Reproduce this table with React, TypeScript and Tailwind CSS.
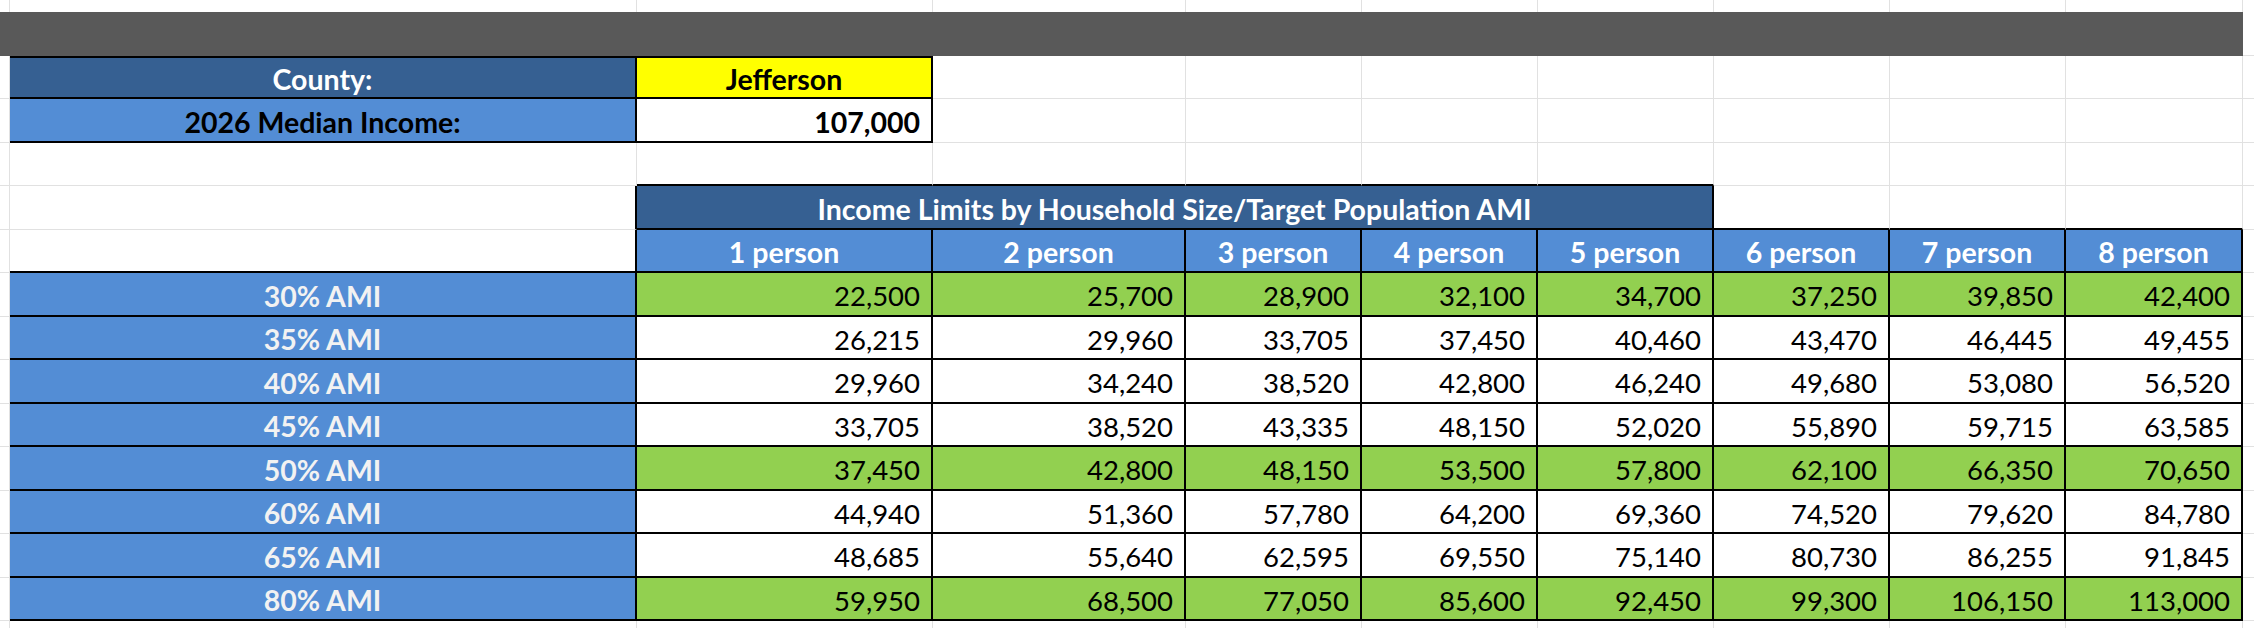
import React from "react";

const G = "border-[#e1e1e1]";
const LB = "bg-[#538dd5]";
const DB = "bg-[#366092]";
const GREEN = "bg-[#92d050]";
const BOLD = "font-bold text-[28.5px]";

const rows: { label: string; vals: string[]; green: boolean }[] = [
  { label: "30% AMI", vals: ["22,500", "25,700", "28,900", "32,100", "34,700", "37,250", "39,850", "42,400"], green: true },
  { label: "35% AMI", vals: ["26,215", "29,960", "33,705", "37,450", "40,460", "43,470", "46,445", "49,455"], green: false },
  { label: "40% AMI", vals: ["29,960", "34,240", "38,520", "42,800", "46,240", "49,680", "53,080", "56,520"], green: false },
  { label: "45% AMI", vals: ["33,705", "38,520", "43,335", "48,150", "52,020", "55,890", "59,715", "63,585"], green: false },
  { label: "50% AMI", vals: ["37,450", "42,800", "48,150", "53,500", "57,800", "62,100", "66,350", "70,650"], green: true },
  { label: "60% AMI", vals: ["44,940", "51,360", "57,780", "64,200", "69,360", "74,520", "79,620", "84,780"], green: false },
  { label: "65% AMI", vals: ["48,685", "55,640", "62,595", "69,550", "75,140", "80,730", "86,255", "91,845"], green: false },
  { label: "80% AMI", vals: ["59,950", "68,500", "77,050", "85,600", "92,450", "99,300", "106,150", "113,000"], green: true },
];

const persons = ["1 person", "2 person", "3 person", "4 person", "5 person", "6 person", "7 person", "8 person"];

function Grid({ n, last = false, k }: { n: number; last?: boolean; k: string }) {
  return (
    <>
      {Array.from({ length: n }).map((_, i) => (
        <div key={k + i} className={`border-b ${i === n - 1 && last ? "" : "border-r"} ${G}`} />
      ))}
    </>
  );
}

export default function App() {
  const font = { fontFamily: "Lato, 'Noto Sans', sans-serif" };
  return (
    <div
      className="w-[2254px] h-[628px] bg-white overflow-hidden grid grid-cols-[10px_627px_296px_253px_176px_176px_176px_176px_176px_177px_11px] grid-rows-[12px_repeat(14,43.5px)_7px] text-[27.5px] text-black"
      style={font}
    >
      {/* row 0 */}
      {Array.from({ length: 11 }).map((_, i) => (
        <div key={"r0" + i} className={i < 10 ? `border-r ${G}` : ""} />
      ))}
      {/* row 1: dark bar */}
      <div className="col-span-10 bg-[#595959]" />
      <div className={`border-b ${G}`} />
      {/* row 2: County */}
      <div className={`border-r border-b ${G}`} />
      <div className={`${DB} border-t-2 border-b-2 border-r-2 border-black flex items-center justify-center ${BOLD} text-white leading-none pt-[4px]`}>
        County:
      </div>
      <div className={`bg-[#ffff00] border-t-2 border-b-2 border-r-2 border-black flex items-center justify-center ${BOLD} leading-none pt-[4px]`}>
        Jefferson
      </div>
      <Grid n={8} last k="r2" />
      {/* row 3: Median */}
      <div className={`border-r border-b ${G}`} />
      <div className={`${LB} border-b-2 border-r-2 border-black flex items-center justify-center ${BOLD} leading-none pt-[4px]`}>
        2026 Median Income:
      </div>
      <div className={`bg-white border-b-2 border-r-2 border-black flex items-center justify-end pr-[11px] ${BOLD} leading-none pt-[4px]`}>
        107,000
      </div>
      <Grid n={8} last k="r3" />
      {/* row 4: empty */}
      <div className={`border-r border-b ${G}`} />
      <div className={`border-r border-b ${G}`} />
      {Array.from({ length: 5 }).map((_, i) => (
        <div key={"r4b" + i} className="border-b-2 border-b-black border-r border-r-[#e1e1e1]" />
      ))}
      <Grid n={4} last k="r4" />
      {/* row 5: Income header */}
      <div className={`border-r border-b ${G}`} />
      <div className="border-b border-b-[#e1e1e1] border-r-2 border-r-black" />
      <div className={`col-span-5 ${DB} border-b-2 border-r-2 border-black flex items-center justify-center ${BOLD} text-white leading-none pt-[4px]`}>
        Income Limits by Household Size/Target Population AMI
      </div>
      {Array.from({ length: 3 }).map((_, i) => (
        <div key={"r5b" + i} className="border-b-2 border-b-black border-r border-r-[#e1e1e1]" />
      ))}
      <div className={`border-b ${G}`} />
      {/* row 6: person header */}
      <div className={`border-r border-b ${G}`} />
      <div className="border-b-2 border-r-2 border-black" />
      {persons.map((p) => (
        <div key={p} className={`${LB} border-b-2 border-r-2 border-black flex items-center justify-center ${BOLD} text-white leading-none pt-[4px]`}>
          {p}
        </div>
      ))}
      <div className={`border-b ${G}`} />
      {/* data rows */}
      {rows.map((r) => (
        <React.Fragment key={r.label}>
          <div className={`border-r border-b ${G}`} />
          <div className={`${LB} border-b-2 border-r-2 border-black flex items-center justify-center ${BOLD} text-[#f2f2f2] leading-none pt-[4px]`}>
            {r.label}
          </div>
          {r.vals.map((v, j) => (
            <div
              key={j}
              className={`${r.green ? GREEN : "bg-white"} border-b-2 border-r-2 border-black flex items-center justify-end pr-[11px] leading-none pt-[4px]`}
            >
              {v}
            </div>
          ))}
          <div className={`border-b ${G}`} />
        </React.Fragment>
      ))}
      {/* final partial row */}
      {Array.from({ length: 11 }).map((_, i) => (
        <div key={"rl" + i} className={i < 10 ? `border-r ${G}` : ""} />
      ))}
    </div>
  );
}
